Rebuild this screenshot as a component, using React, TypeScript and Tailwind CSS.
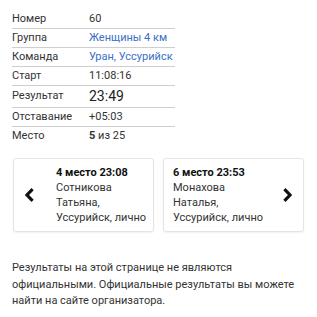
import React from "react";

const rows: { label: string; value: React.ReactNode; big?: boolean; last?: boolean }[] = [
  { label: "Номер", value: "60" },
  { label: "Группа", value: <span className="text-[#3b6fc6]">Женщины 4 км</span> },
  { label: "Команда", value: <span className="text-[#3b6fc6]">Уран, Уссурийск</span> },
  { label: "Старт", value: "11:08:16" },
  { label: "Результат", value: <span className="text-[14px] text-[#222]">23:49</span>, big: true },
  { label: "Отставание", value: "+05:03" },
  {
    label: "Место",
    value: (
      <span>
        <b className="font-bold">5</b> из 25
      </span>
    ),
    last: true,
  },
];

const Chevron = ({ dir }: { dir: "left" | "right" }) => (
  <svg width="9" height="14" viewBox="0 0 9 14" className="block">
    <path
      d={dir === "left" ? "M7.6 1.2 L2 7 L7.6 12.8" : "M1.4 1.2 L7 7 L1.4 12.8"}
      fill="none"
      stroke="#111"
      strokeWidth="3.1"
    />
  </svg>
);

const CardText = ({ title, lines }: { title: string; lines: string[] }) => (
  <div className="leading-[15px] text-[11px] text-[#333]">
    <div className="font-bold text-[#111]">{title}</div>
    {lines.map((l) => (
      <div key={l}>{l}</div>
    ))}
  </div>
);

export default function App() {
  return (
    <div className="w-[317px] h-[317px] overflow-hidden bg-white font-['Roboto',sans-serif] text-[#333]">
      <div className="pt-[10px] pl-[12px]">
        <div className="w-[163px] text-[11px]">
          {rows.map((r) => (
            <div
              key={r.label}
              className={`flex items-center ${r.big ? "h-[22px]" : "h-[19px]"} ${r.last ? "" : "border-b border-[#cfcfcf]"}`}
            >
              <div className="w-[77px] shrink-0">{r.label}</div>
              <div>{r.value}</div>
            </div>
          ))}
        </div>
      </div>

      <div className="grid grid-cols-2 gap-[9px] px-[13px] mt-[12px]">
        <div className="flex items-center rounded-[3px] border border-[#e4e4e4] shadow-[0_1px_2px_rgba(0,0,0,0.06)] py-[6px]">
          <div className="w-[31px] flex justify-center shrink-0">
            <Chevron dir="left" />
          </div>
          <div className="ml-[11px]">
            <CardText title="4 место 23:08" lines={["Сотникова", "Татьяна,", "Уссурийск, лично"]} />
          </div>
        </div>
        <div className="flex items-center rounded-[3px] border border-[#e4e4e4] shadow-[0_1px_2px_rgba(0,0,0,0.06)] py-[6px] pl-[9px]">
          <div className="flex-1">
            <CardText title="6 место 23:53" lines={["Монахова", "Наталья,", "Уссурийск, лично"]} />
          </div>
          <div className="w-[31px] flex justify-center shrink-0">
            <Chevron dir="right" />
          </div>
        </div>
      </div>

      <div className="px-[12px] mt-[28px] text-[11px] leading-[16.5px] text-[#333]">
        <p>
          Результаты на этой странице не являются официальными. Официальные результаты вы можете найти на
          сайте организатора.
        </p>
        <p className="mt-[8px]">
          Сообщить об ошибке можно на сайте <span className="text-[#3b6fc6]">организатора</span>.
        </p>
      </div>
    </div>
  );
}
